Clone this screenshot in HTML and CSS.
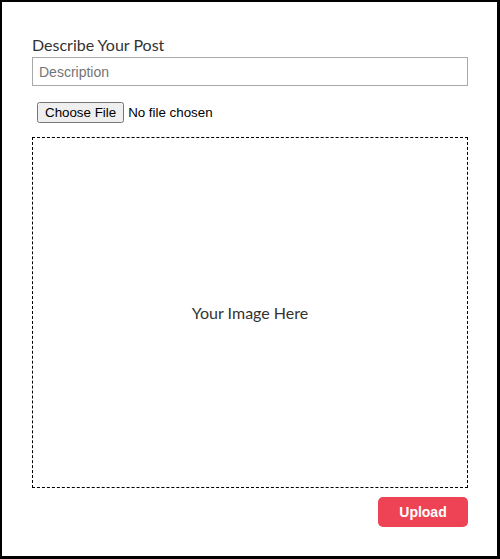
FILE: index.html
```html
<!DOCTYPE html>
<html>
<head>
<meta charset="utf-8">
<link rel="stylesheet" href="styles.css">
</head>
<body>
<div class="frame">
  <form class="post-form">
    <label class="field-label" for="desc">Describe Your Post</label>
    <input class="text-input" id="desc" type="text" placeholder="Description">
    <div class="file-row">
      <input class="file-input" type="file">
    </div>
    <div class="preview">
      <span class="preview-text">Your Image Here</span>
    </div>
    <div class="actions">
      <button class="upload-btn" type="button">Upload</button>
    </div>
  </form>
</div>
</body>
</html>
```
FILE: styles.css
```css
html, body {
  margin: 0;
  padding: 0;
  background: #fff;
}
.frame {
  box-sizing: border-box;
  width: 500px;
  height: 559px;
  border-style: solid;
  border-color: #000;
  border-width: 2px 3px 3px 2px;
  padding: 33px 29px 0 30px;
  font-family: Lato, "Liberation Sans", sans-serif;
}
.post-form {
  display: flex;
  flex-direction: column;
}
.field-label {
  display: block;
  font-size: 16px;
  line-height: 20px;
  color: #333;
  margin-bottom: 2px;
}
.text-input {
  box-sizing: border-box;
  height: 29px;
  width: 100%;
  border: 1px solid #a9a9a9;
  padding: 0 6px;
  font-family: "Liberation Sans", Arial, sans-serif;
  font-size: 14px;
  color: #333;
  outline: none;
}
.text-input::placeholder {
  color: #757575;
}
.file-row {
  margin-top: 16px;
  padding-left: 5px;
  height: 21px;
  display: flex;
  align-items: center;
}
.file-input {
  font-family: "Liberation Sans", Arial, sans-serif;
  font-size: 13.33px;
}
.preview {
  box-sizing: border-box;
  margin-top: 14px;
  height: 351px;
  border: 1px dashed #000;
  display: flex;
  align-items: center;
  justify-content: center;
}
.preview-text {
  font-size: 16px;
  color: #333;
}
.actions {
  display: flex;
  justify-content: flex-end;
  margin-top: 9px;
}
.upload-btn {
  width: 90px;
  height: 30px;
  border: none;
  border-radius: 5px;
  background: #ee4354;
  color: #fff;
  font-family: "Liberation Sans", Arial, sans-serif;
  font-weight: bold;
  font-size: 14px;
}
```
